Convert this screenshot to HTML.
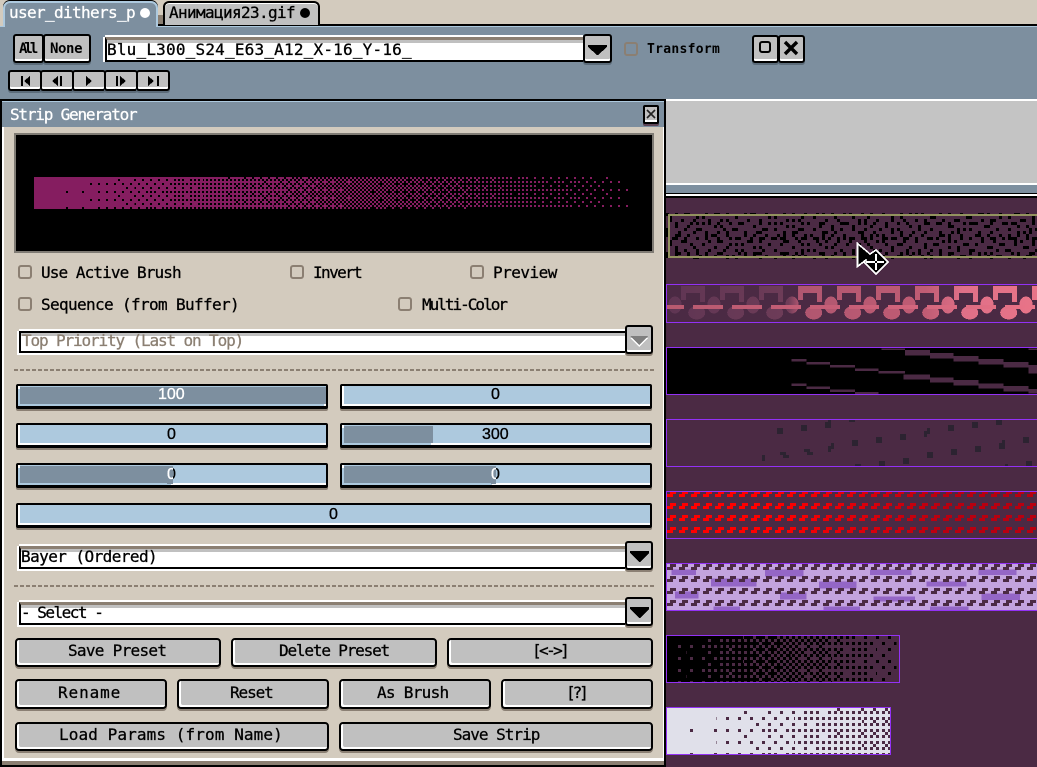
<!DOCTYPE html>
<html lang="en">
<head>
<meta charset="utf-8">
<title>Strip Generator</title>
<style>
html,body{margin:0;padding:0;background:#d3cbbe;overflow:hidden;width:1037px;height:767px}
#r{position:relative;width:1037px;height:767px;overflow:hidden;background:#d3cbbe;font-family:"DejaVu Sans Mono","Liberation Mono",monospace}
#r>*{position:absolute}
.a{position:absolute}
.t{position:absolute;white-space:nowrap;font-size:16px;line-height:18px;color:#000;-webkit-text-stroke:.3px currentColor}
.sm{font-size:14px;font-weight:bold;line-height:14px;-webkit-text-stroke:0}
.n{font-family:"Liberation Sans",sans-serif;-webkit-text-stroke:.35px currentColor}
.b{position:absolute;box-sizing:border-box;background:#c0c0c0;border:2px solid #000;border-radius:4px;box-shadow:inset 2px -2px 0 #fff,0 2px 0 #8b8074}
.tb{box-shadow:inset 0 -2px 0 #fff,0 2px 0 #5c6c7a;border-radius:3px}
.c{position:absolute;box-sizing:border-box;width:14px;height:14px;border:2px solid #8b7f72;border-radius:3px}
.i{position:absolute;box-sizing:border-box;background:#fff;border-top:3px solid #8b7f72;border-left:2px solid #000;border-bottom:2px solid #000;box-shadow:0 -2px 0 #fff,-2px 0 0 #fff,0 2px 0 #fff,-2px 2px 0 #fff,inset 0 3px 0 #c0c0c0}
.s{position:absolute;box-sizing:border-box;height:25px;background:#adc9de;border:2px solid #000;border-bottom-width:3px;border-radius:2px;box-shadow:inset 2px -2px 0 #fff,0 2px 0 #8b8074;overflow:visible}
.f{position:absolute;left:2px;top:1px;height:17px;background:#7d8f9f;box-shadow:-2px 2px 0 #adc9de,0 -1px 0 #adc9de}
.d{position:absolute;left:14px;width:640px;height:2px;background:repeating-linear-gradient(90deg,#8b7f72 0 4px,transparent 4px 6px)}
</style>
</head>
<body>
<div id="r">

<!-- canvas art -->
<svg width="1037" height="767" viewBox="0 0 1037 767" shape-rendering="crispEdges" style="left:0;top:0">
<defs>
<pattern id="pk" patternUnits="userSpaceOnUse" x="0" y="7" width="8" height="8"><rect width="1" height="1" fill="#000"/></pattern>
<pattern id="pp" patternUnits="userSpaceOnUse" x="4" y="3" width="8" height="8"><rect width="1" height="1" fill="#4b2a44"/></pattern>
<pattern id="pq" patternUnits="userSpaceOnUse" x="0" y="7" width="8" height="8"><rect width="1" height="1" fill="#4b2a44"/></pattern>
<symbol id="b" overflow="hidden">
<rect x="0%" y="0" width="100%" height="16" transform="translate(0 0)"/>
<rect x="1.56%" y="-4" width="100%" height="16" transform="translate(4 4)"/>
<rect x="3.13%" y="0" width="100%" height="16" transform="translate(4 0)"/>
<rect x="4.69%" y="-4" width="100%" height="16" transform="translate(0 4)"/>
<rect x="6.25%" y="-2" width="100%" height="16" transform="translate(2 2)"/>
<rect x="7.81%" y="-6" width="100%" height="16" transform="translate(6 6)"/>
<rect x="9.38%" y="-2" width="100%" height="16" transform="translate(6 2)"/>
<rect x="10.94%" y="-6" width="100%" height="16" transform="translate(2 6)"/>
<rect x="12.5%" y="0" width="100%" height="16" transform="translate(2 0)"/>
<rect x="14.06%" y="-4" width="100%" height="16" transform="translate(6 4)"/>
<rect x="15.63%" y="0" width="100%" height="16" transform="translate(6 0)"/>
<rect x="17.19%" y="-4" width="100%" height="16" transform="translate(2 4)"/>
<rect x="18.75%" y="-2" width="100%" height="16" transform="translate(0 2)"/>
<rect x="20.31%" y="-6" width="100%" height="16" transform="translate(4 6)"/>
<rect x="21.88%" y="-2" width="100%" height="16" transform="translate(4 2)"/>
<rect x="23.44%" y="-6" width="100%" height="16" transform="translate(0 6)"/>
<rect x="25%" y="-1" width="100%" height="16" transform="translate(1 1)"/>
<rect x="26.56%" y="-5" width="100%" height="16" transform="translate(5 5)"/>
<rect x="28.13%" y="-1" width="100%" height="16" transform="translate(5 1)"/>
<rect x="29.69%" y="-5" width="100%" height="16" transform="translate(1 5)"/>
<rect x="31.25%" y="-3" width="100%" height="16" transform="translate(3 3)"/>
<rect x="32.81%" y="-7" width="100%" height="16" transform="translate(7 7)"/>
<rect x="34.38%" y="-3" width="100%" height="16" transform="translate(7 3)"/>
<rect x="35.94%" y="-7" width="100%" height="16" transform="translate(3 7)"/>
<rect x="37.5%" y="-1" width="100%" height="16" transform="translate(3 1)"/>
<rect x="39.06%" y="-5" width="100%" height="16" transform="translate(7 5)"/>
<rect x="40.63%" y="-1" width="100%" height="16" transform="translate(7 1)"/>
<rect x="42.19%" y="-5" width="100%" height="16" transform="translate(3 5)"/>
<rect x="43.75%" y="-3" width="100%" height="16" transform="translate(1 3)"/>
<rect x="45.31%" y="-7" width="100%" height="16" transform="translate(5 7)"/>
<rect x="46.88%" y="-3" width="100%" height="16" transform="translate(5 3)"/>
<rect x="48.44%" y="-7" width="100%" height="16" transform="translate(1 7)"/>
<rect x="50%" y="0" width="100%" height="16" transform="translate(1 0)"/>
<rect x="51.56%" y="-4" width="100%" height="16" transform="translate(5 4)"/>
<rect x="53.13%" y="0" width="100%" height="16" transform="translate(5 0)"/>
<rect x="54.69%" y="-4" width="100%" height="16" transform="translate(1 4)"/>
<rect x="56.25%" y="-2" width="100%" height="16" transform="translate(3 2)"/>
<rect x="57.81%" y="-6" width="100%" height="16" transform="translate(7 6)"/>
<rect x="59.38%" y="-2" width="100%" height="16" transform="translate(7 2)"/>
<rect x="60.94%" y="-6" width="100%" height="16" transform="translate(3 6)"/>
<rect x="62.5%" y="0" width="100%" height="16" transform="translate(3 0)"/>
<rect x="64.06%" y="-4" width="100%" height="16" transform="translate(7 4)"/>
<rect x="65.63%" y="0" width="100%" height="16" transform="translate(7 0)"/>
<rect x="67.19%" y="-4" width="100%" height="16" transform="translate(3 4)"/>
<rect x="68.75%" y="-2" width="100%" height="16" transform="translate(1 2)"/>
<rect x="70.31%" y="-6" width="100%" height="16" transform="translate(5 6)"/>
<rect x="71.88%" y="-2" width="100%" height="16" transform="translate(5 2)"/>
<rect x="73.44%" y="-6" width="100%" height="16" transform="translate(1 6)"/>
<rect x="75%" y="-1" width="100%" height="16" transform="translate(0 1)"/>
<rect x="76.56%" y="-5" width="100%" height="16" transform="translate(4 5)"/>
<rect x="78.13%" y="-1" width="100%" height="16" transform="translate(4 1)"/>
<rect x="79.69%" y="-5" width="100%" height="16" transform="translate(0 5)"/>
<rect x="81.25%" y="-3" width="100%" height="16" transform="translate(2 3)"/>
<rect x="82.81%" y="-7" width="100%" height="16" transform="translate(6 7)"/>
<rect x="84.38%" y="-3" width="100%" height="16" transform="translate(6 3)"/>
<rect x="85.94%" y="-7" width="100%" height="16" transform="translate(2 7)"/>
<rect x="87.5%" y="-1" width="100%" height="16" transform="translate(2 1)"/>
<rect x="89.06%" y="-5" width="100%" height="16" transform="translate(6 5)"/>
<rect x="90.63%" y="-1" width="100%" height="16" transform="translate(6 1)"/>
<rect x="92.19%" y="-5" width="100%" height="16" transform="translate(2 5)"/>
<rect x="93.75%" y="-3" width="100%" height="16" transform="translate(0 3)"/>
<rect x="95.31%" y="-7" width="100%" height="16" transform="translate(4 7)"/>
<rect x="96.88%" y="-3" width="100%" height="16" transform="translate(4 3)"/>
<rect x="98.44%" y="-7" width="100%" height="16" transform="translate(0 7)"/>
</symbol>

<pattern id="na" patternUnits="userSpaceOnUse" width="13" height="7" patternTransform="translate(666 213) scale(3)"><path d="M0 0h1v1h-1zM3 0h1v1h-1zM7 0h1v1h-1zM10 1h1v1h-1zM1 2h1v1h-1zM5 2h1v1h-1zM8 3h1v1h-1zM12 3h1v1h-1zM3 4h1v1h-1zM6 5h1v1h-1zM10 5h1v1h-1zM0 6h1v1h-1zM4 6h1v1h-1z"/></pattern>
<pattern id="nb" patternUnits="userSpaceOnUse" width="11" height="9" patternTransform="translate(666 213) scale(3)"><path d="M1 1h1v1h-1zM6 0h1v1h-1zM9 2h1v1h-1zM3 3h1v1h-1zM7 4h1v1h-1zM0 5h1v1h-1zM4 7h1v1h-1zM9 6h1v1h-1zM2 8h1v1h-1zM6 8h1v1h-1zM10 8h1v1h-1z"/></pattern>
<pattern id="nc" patternUnits="userSpaceOnUse" width="7" height="5" patternTransform="translate(666 213) scale(3)"><path d="M3 3h1v1h-1z"/></pattern>

<pattern id="n2" patternUnits="userSpaceOnUse" x="666" y="285" width="39" height="39">
<ellipse cx="9" cy="20" rx="6.7" ry="8.5" fill="#fff"/><ellipse cx="30.7" cy="27.7" rx="8.5" ry="6.7" fill="#fff"/>
<rect x="15" y="1" width="24" height="7" fill="#fff"/><rect x="34" y="1" width="5" height="16" fill="#fff"/><rect x="15" y="1" width="5" height="14" fill="#fff"/>
</pattern>
<pattern id="n3" patternUnits="userSpaceOnUse" x="666" y="285" width="39" height="39">
<rect x="27" y="20" width="12" height="4" fill="#fff"/><rect x="0" y="20" width="18" height="4" fill="#fff"/>
</pattern>
<linearGradient id="g2" gradientUnits="userSpaceOnUse" x1="666" y1="0" x2="1037" y2="0">
<stop offset="0" stop-color="#5f3553"/><stop offset=".33" stop-color="#6e3c58"/><stop offset=".36" stop-color="#b05670"/><stop offset=".7" stop-color="#c05c74"/><stop offset=".8" stop-color="#e07088"/><stop offset="1" stop-color="#e87488"/>
</linearGradient>
<linearGradient id="g3" gradientUnits="userSpaceOnUse" x1="666" y1="0" x2="1037" y2="0">
<stop offset="0" stop-color="#b85a70"/><stop offset=".5" stop-color="#c85f78"/><stop offset="1" stop-color="#ea7488"/>
</linearGradient>
<mask id="m2" maskUnits="userSpaceOnUse" x="666" y="285" width="371" height="37"><rect x="666" y="285" width="371" height="37" fill="url(#n2)"/></mask>
<mask id="m3" maskUnits="userSpaceOnUse" x="666" y="285" width="371" height="37"><rect x="666" y="285" width="371" height="37" fill="url(#n3)"/></mask>

<pattern id="n5" patternUnits="userSpaceOnUse" x="667" y="491" width="12" height="12"><rect x="3" y="0" width="6" height="3" fill="#fff"/><rect x="0" y="3" width="6" height="3" fill="#fff"/></pattern>
<mask id="m5" maskUnits="userSpaceOnUse" x="666" y="491" width="371" height="48"><rect x="666" y="491" width="371" height="48" fill="url(#n5)"/></mask>
<linearGradient id="g5" gradientUnits="userSpaceOnUse" x1="666" y1="0" x2="1037" y2="0">
<stop offset="0" stop-color="#ff0000"/><stop offset=".3" stop-color="#ff0000"/><stop offset=".55" stop-color="#d8000c"/><stop offset=".75" stop-color="#b80010"/><stop offset="1" stop-color="#b80010"/>
</linearGradient>
<pattern id="n6" patternUnits="userSpaceOnUse" x="667" y="564" width="12" height="12"><rect x="3" y="0" width="6" height="3" fill="#4b2a44"/><rect x="0" y="3" width="6" height="3" fill="#4b2a44"/></pattern>
</defs>

<!-- right canvas -->
<rect x="666" y="99" width="371" height="2" fill="#fff"/>
<rect x="666" y="101" width="371" height="82" fill="#c4c4c4"/>
<rect x="666" y="183" width="371" height="2" fill="#fff"/>
<rect x="666" y="185" width="371" height="8" fill="#7d8f9f"/>
<rect x="666" y="193" width="371" height="1" fill="#000"/>
<rect x="666" y="194" width="371" height="2" fill="#fff"/>
<rect x="666" y="196" width="371" height="2" fill="#000"/>
<rect x="666" y="198" width="371" height="569" fill="#4b2a44"/>

<!-- strip 1 -->
<rect x="666" y="213" width="371" height="46" fill="url(#na)"/>
<rect x="666" y="213" width="371" height="46" fill="url(#nb)"/>
<rect x="666" y="213" width="371" height="46" fill="url(#nc)"/>
<path d="M1037 215H669V257H1037" fill="none" stroke="#93925f" stroke-width="2"/>

<!-- strip 2 -->
<rect x="666" y="285" width="371" height="37" fill="url(#g2)" mask="url(#m2)"/>
<rect x="666" y="285" width="371" height="37" fill="url(#g3)" mask="url(#m3)"/>

<!-- strip 3 -->
<rect x="666" y="348" width="371" height="46" fill="#000"/>
<g transform="translate(660 180) scale(.33333)" fill="#4b2a44">
<rect x="395" y="537" width="45" height="8"/><rect x="440" y="546" width="70" height="8"/><rect x="510" y="555" width="75" height="8"/><rect x="585" y="565" width="70" height="8"/><rect x="655" y="573" width="80" height="8"/><rect x="730" y="583" width="80" height="16"/><rect x="810" y="592" width="70" height="16"/><rect x="880" y="600" width="75" height="17"/><rect x="955" y="610" width="75" height="16"/><rect x="1030" y="618" width="75" height="17"/><rect x="1105" y="627" width="26" height="13"/>
<rect x="395" y="610" width="45" height="8"/><rect x="440" y="619" width="70" height="8"/><rect x="510" y="628" width="75" height="8"/><rect x="585" y="636" width="70" height="6"/>
<rect x="665" y="505" width="70" height="5"/><rect x="735" y="510" width="75" height="17"/><rect x="810" y="519" width="70" height="17"/><rect x="880" y="528" width="75" height="17"/><rect x="955" y="537" width="75" height="16"/><rect x="1030" y="546" width="75" height="17"/><rect x="1105" y="555" width="26" height="25"/><rect x="1105" y="505" width="26" height="5"/>
</g>

<!-- strip 4 -->
<g transform="translate(660 410) scale(.33333)" fill="#2c2331">
<rect x="351" y="54" width="18" height="18"/><rect x="423" y="45" width="18" height="18"/><rect x="495" y="36" width="18" height="18"/><rect x="567" y="30" width="18" height="6"/><rect x="864" y="45" width="18" height="18"/><rect x="936" y="36" width="18" height="18"/><rect x="1008" y="30" width="18" height="15"/>
<rect x="576" y="90" width="18" height="18"/><rect x="648" y="81" width="18" height="18"/><rect x="720" y="72" width="18" height="18"/><rect x="1089" y="81" width="18" height="18"/>
<rect x="801" y="126" width="18" height="18"/><rect x="873" y="117" width="18" height="18"/><rect x="945" y="108" width="18" height="18"/><rect x="1017" y="99" width="18" height="18"/>
<rect x="729" y="144" width="18" height="18"/><rect x="657" y="153" width="18" height="15"/><rect x="585" y="162" width="18" height="6"/><rect x="1098" y="153" width="18" height="15"/>
<rect x="504" y="30" width="9" height="9"/><rect x="513" y="99" width="9" height="18"/><rect x="504" y="108" width="9" height="18"/><rect x="360" y="126" width="18" height="9"/><rect x="369" y="135" width="18" height="9"/><rect x="432" y="117" width="18" height="9"/><rect x="441" y="126" width="18" height="9"/><rect x="801" y="54" width="9" height="18"/><rect x="792" y="63" width="9" height="18"/><rect x="1026" y="90" width="9" height="9"/><rect x="306" y="135" width="9" height="18"/><rect x="1035" y="162" width="9" height="6"/>
</g>

<!-- strip 5 -->
<rect x="666" y="491" width="371" height="48" fill="url(#g5)" mask="url(#m5)"/>

<!-- strip 6 -->
<rect x="666" y="564" width="371" height="47" fill="#c3a3df"/>
<g transform="translate(660 410) scale(.33333)" fill="#9466c6">
<rect x="35" y="478" width="73" height="17"/><rect x="315" y="478" width="115" height="22"/><rect x="630" y="478" width="125" height="17"/><rect x="955" y="478" width="115" height="17"/>
<rect x="153" y="505" width="137" height="25"/><rect x="477" y="515" width="113" height="20"/><rect x="800" y="515" width="120" height="15"/>
<rect x="45" y="545" width="70" height="20"/><rect x="360" y="548" width="80" height="20"/><rect x="640" y="560" width="125" height="15"/><rect x="965" y="550" width="115" height="20"/>
<rect x="160" y="590" width="80" height="10"/><rect x="490" y="590" width="110" height="10"/><rect x="810" y="590" width="115" height="10"/>
</g>
<rect x="666" y="564" width="371" height="47" fill="url(#n6)"/>

<!-- strip 7 -->
<rect x="666" y="636" width="234" height="47" fill="#000"/>
<svg x="666" y="636" width="234" height="47"><g transform="scale(3)"><use href="#b" width="78" height="16" fill="url(#pp)"/></g></svg>

<!-- strip 8 -->
<rect x="666" y="708" width="225" height="47" fill="#e0e0ea"/>
<svg x="666" y="708" width="225" height="47"><g transform="scale(3)"><use href="#b" x="8" width="190" height="16" fill="url(#pq)"/></g></svg>

<!-- strip borders -->
<g fill="none" stroke="#9331f5" stroke-width="1">
<path d="M1037 284.5H666.5V322.5H1037"/>
<path d="M1037 347.5H666.5V394.5H1037"/>
<path d="M1037 419.5H666.5V466.5H1037"/>
<path d="M1037 491.5H666.5V538.5H1037"/>
<path d="M1037 563.5H666.5V610.5H1037"/>
<rect x="666.5" y="635.5" width="233" height="47"/>
<rect x="666.5" y="707.5" width="224" height="47"/>
</g>
</svg>

<!-- toolbar -->
<div style="left:0;top:26px;width:1037px;height:73px;background:#7d8f9f"></div>
<div style="left:0;top:26px;width:1037px;height:1px;background:#adc9de"></div>
<div style="left:158px;top:24px;width:879px;height:2px;background:#000"></div>
<div style="left:158px;top:15px;width:5px;height:9px;background:#8b7f72"></div>

<!-- tabs -->
<div style="box-sizing:border-box;left:3px;top:1px;width:155px;height:26px;background:#7d8f9f;border:2px solid #adc9de;border-bottom:0;border-radius:7px 7px 0 0;box-shadow:0 -1px 0 #000"></div>
<span class="t" style="left:9px;top:4px;color:#fff;letter-spacing:-.63px">user_dithers_p</span>
<div style="left:140px;top:8px;width:10px;height:10px;border-radius:50%;background:#fff"></div>
<div style="box-sizing:border-box;left:163px;top:1px;width:157px;height:24px;background:#c0c0c0;border:2px solid #000;border-bottom:0;border-radius:6px 6px 0 0;box-shadow:inset 0 1px 0 #fff"></div>
<span class="t" style="left:169px;top:4px;letter-spacing:-.63px">Анимация23.gif</span>
<div style="left:300px;top:8px;width:10px;height:10px;border-radius:50%;background:#000"></div>

<!-- toolbar widgets -->
<div class="b tb" style="left:13px;top:34px;width:31px;height:29px"></div>
<span class="t sm" style="left:19px;top:42px;letter-spacing:-3px">All</span>
<div class="b tb" style="left:43px;top:34px;width:48px;height:29px"></div>
<span class="t sm" style="left:50px;top:42px;letter-spacing:-.4px">None</span>

<div class="i" style="left:105px;top:37px;width:478px;height:25px;box-shadow:0 -2px 0 #fff,-2px 0 0 #fff,inset 0 3px 0 #c0c0c0"></div>
<span class="t" style="left:107px;top:41px;letter-spacing:.2px">Blu_L300_S24_E63_A12_X-16_Y-16_</span>
<div class="b tb" style="left:583px;top:34px;width:29px;height:29px"></div>

<div class="c" style="left:624px;top:42px"></div>
<span class="t sm" style="left:647px;top:43px;font-size:13px;letter-spacing:.3px">Transform</span>
<div class="b tb" style="left:752px;top:35px;width:27px;height:28px"></div>
<div class="b tb" style="left:778px;top:35px;width:27px;height:28px"></div>

<div class="b tb" style="left:8px;top:70px;width:34px;height:21px"></div>
<div class="b tb" style="left:40px;top:70px;width:34px;height:21px"></div>
<div class="b tb" style="left:72px;top:70px;width:34px;height:21px"></div>
<div class="b tb" style="left:104px;top:70px;width:34px;height:21px"></div>
<div class="b tb" style="left:136px;top:70px;width:34px;height:21px"></div>

<!-- panel -->
<div style="left:0;top:99px;width:666px;height:668px;background:#000"></div>
<div style="left:2px;top:101px;width:662px;height:1px;background:#adc9de"></div>
<div style="left:2px;top:102px;width:662px;height:25px;background:#7d8f9f"></div>
<div style="left:2px;top:127px;width:661px;height:631px;background:#fff"></div>
<div style="left:4px;top:127px;width:659px;height:631px;background:#d3cbbe"></div>
<div style="left:663px;top:127px;width:1px;height:631px;background:#fff"></div>
<div style="left:2px;top:758px;width:662px;height:3px;background:#fff"></div>
<div style="left:2px;top:761px;width:662px;height:4px;background:#8b7f72"></div>

<span class="t" style="left:10px;top:106px;color:#fff;letter-spacing:-1.2px">Strip Generator</span>
<div class="b tb" style="left:643px;top:105px;width:16px;height:19px;box-shadow:inset 0 -2px 0 #fff,0 2px 0 #5e4658;border-radius:2px"></div>

<!-- preview -->
<div style="left:14px;top:133px;width:640px;height:120px;background:#7f7b74"></div>
<div style="left:16px;top:135px;width:636px;height:116px;background:#000"></div>
<svg width="640" height="120" viewBox="14 133 640 120" shape-rendering="crispEdges" style="left:14px;top:133px">
<rect x="34" y="177" width="596" height="32" fill="#851d60"/>
<svg x="66" y="177" width="564" height="32"><g transform="scale(2)"><use href="#b" width="295" height="16" fill="url(#pk)"/></g></svg>
</svg>

<!-- checkboxes -->
<div class="c" style="left:18px;top:265px"></div>
<span class="t" style="left:41px;top:264px;letter-spacing:-.9px">Use Active Brush</span>
<div class="c" style="left:290px;top:265px"></div>
<span class="t" style="left:313px;top:264px;letter-spacing:-1.6px">Invert</span>
<div class="c" style="left:470px;top:265px"></div>
<span class="t" style="left:493px;top:264px;letter-spacing:-.5px">Preview</span>
<div class="c" style="left:18px;top:297px"></div>
<span class="t" style="left:41px;top:296px;letter-spacing:-.63px">Sequence (from Buffer)</span>
<div class="c" style="left:398px;top:297px"></div>
<span class="t" style="left:422px;top:296px;letter-spacing:-2px">Multi-Color</span>

<!-- priority dropdown -->
<div class="i" style="left:19px;top:331px;width:606px;height:22px;border-top:2px solid #000"></div>
<span class="t" style="left:22px;top:332px;color:#8b7f72;letter-spacing:-1.13px">Top Priority (Last on Top)</span>
<div class="b tb" style="left:625px;top:325px;width:28px;height:29px;box-shadow:inset 0 -2px 0 #fff,0 2px 0 #8b8074"></div>
<div class="d" style="top:369px"></div>

<!-- sliders -->
<div class="s" style="left:16px;top:384px;width:312px"><div class="f" style="width:306px"></div></div>
<span class="t n" style="left:158px;top:386px;color:#fff">100</span>
<div class="s" style="left:340px;top:384px;width:312px"></div>
<span class="t n" style="left:491px;top:386px">0</span>

<div class="s" style="left:16px;top:423px;width:312px"></div>
<span class="t n" style="left:167px;top:426px">0</span>
<div class="s" style="left:340px;top:423px;width:312px"><div class="f" style="width:89px"></div></div>
<span class="t n" style="left:482px;top:426px">300</span>

<div class="s" style="left:16px;top:463px;width:312px"><div class="f" style="width:153px"></div></div>
<div class="a" style="left:167px;top:466px;width:9px;height:18px;overflow:hidden"><span class="t n" style="left:0;top:0;color:#000">0</span></div>
<div class="a" style="left:167px;top:466px;width:6px;height:18px;overflow:hidden;background:#7d8f9f"><span class="t n" style="left:0;top:0;color:#fff">0</span></div>
<div class="s" style="left:340px;top:463px;width:312px"><div class="f" style="width:150px"></div></div>
<div class="a" style="left:491px;top:466px;width:9px;height:18px;overflow:hidden"><span class="t n" style="left:0;top:0;color:#000">0</span></div>
<div class="a" style="left:491px;top:466px;width:5px;height:18px;overflow:hidden;background:#7d8f9f"><span class="t n" style="left:0;top:0;color:#fff">0</span></div>

<div class="s" style="left:16px;top:503px;width:636px"></div>
<span class="t n" style="left:329px;top:506px">0</span>

<!-- bayer -->
<div class="i" style="left:19px;top:546px;width:606px;height:23px"></div>
<span class="t" style="left:21px;top:548px;letter-spacing:-.56px">Bayer (Ordered)</span>
<div class="b tb" style="left:625px;top:541px;width:28px;height:29px;box-shadow:inset 0 -2px 0 #fff,0 2px 0 #8b8074"></div>
<div class="d" style="top:585px"></div>

<!-- select -->
<div class="i" style="left:19px;top:602px;width:606px;height:23px"></div>
<span class="t" style="left:21px;top:604px;letter-spacing:-1.5px">- Select -</span>
<div class="b tb" style="left:625px;top:597px;width:28px;height:29px;box-shadow:inset 0 -2px 0 #fff,0 2px 0 #8b8074"></div>

<!-- buttons -->
<div class="b" style="left:15px;top:638px;width:206px;height:29px"></div>
<span class="t" style="left:68px;top:642px;letter-spacing:-.7px">Save Preset</span>
<div class="b" style="left:231px;top:638px;width:206px;height:29px"></div>
<span class="t" style="left:279px;top:642px;letter-spacing:-1.17px">Delete Preset</span>
<div class="b" style="left:447px;top:638px;width:206px;height:29px"></div>
<span class="t" style="left:532px;top:642px;letter-spacing:-2.6px">[&lt;-&gt;]</span>

<div class="b" style="left:15px;top:679px;width:152px;height:30px"></div>
<span class="t" style="left:58px;top:684px;letter-spacing:.9px">Rename</span>
<div class="b" style="left:177px;top:679px;width:152px;height:30px"></div>
<span class="t" style="left:230px;top:684px;letter-spacing:-1.1px">Reset</span>
<div class="b" style="left:339px;top:679px;width:152px;height:30px"></div>
<span class="t" style="left:377px;top:684px;letter-spacing:-.7px">As Brush</span>
<div class="b" style="left:501px;top:679px;width:152px;height:30px"></div>
<span class="t" style="left:566px;top:684px;letter-spacing:-3px">[?]</span>

<div class="b" style="left:15px;top:722px;width:314px;height:29px"></div>
<span class="t" style="left:59px;top:726px;letter-spacing:.1px">Load Params (from Name)</span>
<div class="b" style="left:339px;top:722px;width:314px;height:29px"></div>
<span class="t" style="left:453px;top:726px;letter-spacing:-1px">Save Strip</span>

<!-- icons overlay -->
<svg width="1037" height="767" viewBox="0 0 1037 767" style="left:0;top:0">
<g shape-rendering="crispEdges" fill="#000">
<rect x="21" y="76" width="2" height="10"/><polygon points="30,76 30,86 24,81"/>
<polygon points="58,76 58,86 52,81"/><rect x="60" y="76" width="2" height="10"/>
<polygon points="86,76 86,86 92,81"/>
<rect x="116" y="76" width="2" height="10"/><polygon points="120,76 120,86 126,81"/>
<polygon points="148,76 148,86 154,81"/><rect x="157" y="76" width="2" height="10"/>
</g>
<!-- dropdown arrows -->
<polygon points="588,45 607,45 607,47 598,55 597,55 588,47" fill="#000" shape-rendering="crispEdges"/>
<polygon points="630,338 648,338 639,347" fill="#fff" shape-rendering="crispEdges"/>
<polygon points="630,336 648,336 639,345" fill="#7f7f7f" shape-rendering="crispEdges"/>
<polygon points="630,551 649,551 649,553 640,562 639,562 630,553" fill="#000" shape-rendering="crispEdges"/>
<polygon points="630,607 649,607 649,609 640,618 639,618 630,609" fill="#000" shape-rendering="crispEdges"/>
<!-- toolbar 0 and X -->
<rect x="760" y="42" width="10" height="10" rx="2" fill="none" stroke="#000" stroke-width="2"/>
<path d="M785 42 L797 54 M797 42 L785 54" stroke="#000" stroke-width="3.4" fill="none"/>
<!-- panel close -->
<path d="M647 110 L655 118 M655 110 L647 118" stroke="#222" stroke-width="1.6" fill="none"/>
<!-- cursor -->
<polygon points="857.5,243.5 870,254 876,250 888,262 876,274 864,262 866.5,259.5 857.5,266.5" fill="#000" stroke="#fff" stroke-width="1.6" stroke-linejoin="miter" shape-rendering="crispEdges"/>
<path d="M866 262H884M876 254V270" stroke="#fff" stroke-width="1.6" fill="none" shape-rendering="crispEdges"/>
<rect x="875" y="261" width="2" height="2" fill="#000"/>
</svg>

</div>
</body>
</html>
